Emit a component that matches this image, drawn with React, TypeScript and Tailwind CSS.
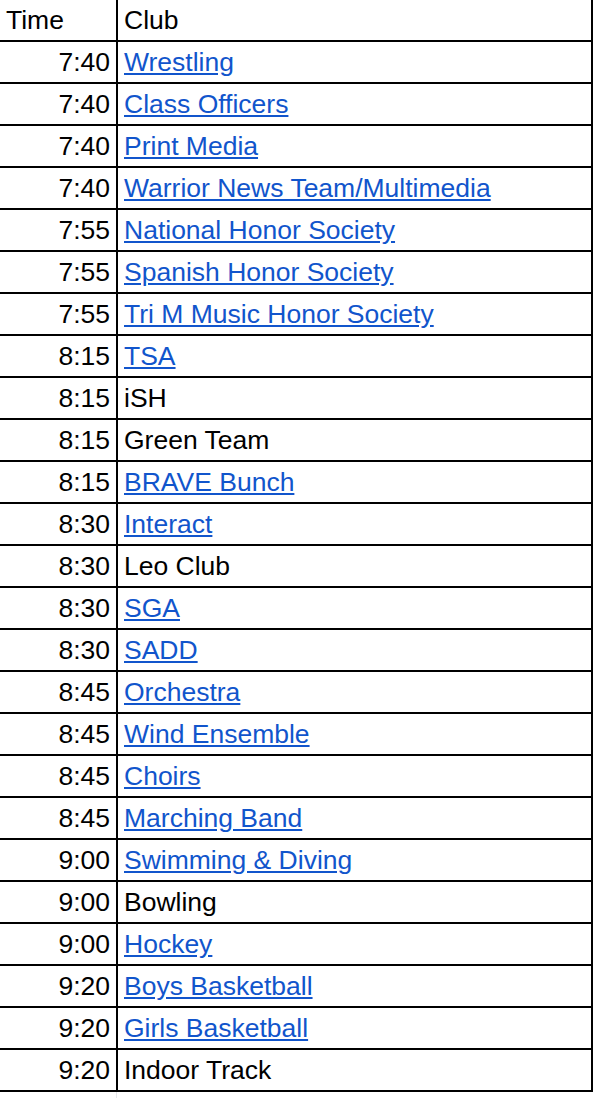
const rows: { time: string; club: string; link: boolean }[] = [
  { time: "7:40", club: "Wrestling", link: true },
  { time: "7:40", club: "Class Officers", link: true },
  { time: "7:40", club: "Print Media", link: true },
  { time: "7:40", club: "Warrior News Team/Multimedia", link: true },
  { time: "7:55", club: "National Honor Society", link: true },
  { time: "7:55", club: "Spanish Honor Society", link: true },
  { time: "7:55", club: "Tri M Music Honor Society", link: true },
  { time: "8:15", club: "TSA", link: true },
  { time: "8:15", club: "iSH", link: false },
  { time: "8:15", club: "Green Team", link: false },
  { time: "8:15", club: "BRAVE Bunch", link: true },
  { time: "8:30", club: "Interact", link: true },
  { time: "8:30", club: "Leo Club", link: false },
  { time: "8:30", club: "SGA", link: true },
  { time: "8:30", club: "SADD", link: true },
  { time: "8:45", club: "Orchestra", link: true },
  { time: "8:45", club: "Wind Ensemble", link: true },
  { time: "8:45", club: "Choirs", link: true },
  { time: "8:45", club: "Marching Band", link: true },
  { time: "9:00", club: "Swimming & Diving", link: true },
  { time: "9:00", club: "Bowling", link: false },
  { time: "9:00", club: "Hockey", link: true },
  { time: "9:20", club: "Boys Basketball", link: true },
  { time: "9:20", club: "Girls Basketball", link: true },
  { time: "9:20", club: "Indoor Track", link: false },
];

const App = () => {
  return (
    <div className="min-h-screen bg-white font-['Liberation_Sans',Arial,sans-serif] text-[26.5px] leading-[40px] text-black">
      <div className="w-[593px]">
        {/* Header */}
        <div className="flex border-b-2 border-black">
          <div className="w-[118px] h-[40px] border-r-2 border-black pl-[6px]">Time</div>
          <div className="w-[475px] h-[40px] border-r-2 border-black pl-[6px]">Club</div>
        </div>

        {rows.map((row, i) => (
          <div key={i} className="flex border-b-2 border-black">
            <div className="w-[118px] h-[40px] border-r-2 border-black pr-[6px] text-right">
              {row.time}
            </div>
            <div className="w-[475px] h-[40px] border-r-2 border-black pl-[6px] whitespace-nowrap">
              {row.link ? (
                <a href="#" className="text-[#1155cc] underline">
                  {row.club}
                </a>
              ) : (
                row.club
              )}
            </div>
          </div>
        ))}
      </div>
      <div className="ml-[116px] h-[6px] w-px bg-gray-200" />
    </div>
  );
};

export default App;
